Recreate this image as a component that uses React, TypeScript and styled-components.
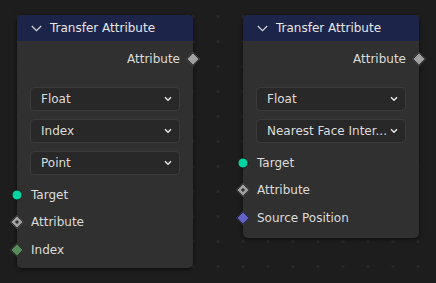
import React from "react";
import styled, { createGlobalStyle, css } from "styled-components";

const GlobalStyle = createGlobalStyle`
  html, body {
    margin: 0;
    padding: 0;
    background: #1d1d1d;
  }
  body {
    font-family: "DejaVu Sans", "Liberation Sans", sans-serif;
    font-size: 12px;
  }
`;

type SocketKind = "geometry" | "float" | "field" | "int" | "vector";

const socketColors: Record<SocketKind, string> = {
  geometry: "#00d6a3",
  float: "#a1a1a1",
  field: "#a1a1a1",
  int: "#598c5c",
  vector: "#6363c7",
};

interface NodeData {
  output: string;
  options: string[];
  inputs: { label: string; kind: SocketKind }[];
  bottom: number;
}

const nodes: NodeData[] = [
  {
    output: "Attribute",
    options: ["Float", "Index", "Point"],
    inputs: [
      { label: "Target", kind: "geometry" },
      { label: "Attribute", kind: "field" },
      { label: "Index", kind: "int" },
    ],
    bottom: 4,
  },
  {
    output: "Attribute",
    options: ["Float", "Nearest Face Inter..."],
    inputs: [
      { label: "Target", kind: "geometry" },
      { label: "Attribute", kind: "field" },
      { label: "Source Position", kind: "vector" },
    ],
    bottom: 6,
  },
];

const Canvas = styled.div`
  width: 436px;
  height: 283px;
  box-sizing: border-box;
  overflow: hidden;
  display: flex;
  align-items: flex-start;
  gap: 50px;
  padding: 15px 0 0 17px;
  background-color: #1d1d1d;
  background-image: radial-gradient(circle, #2a2a2a 1.3px, transparent 1.6px);
  background-size: 25px 25px;
  background-position: 5.5px 4px;
`;

const Node = styled.div<{ $bottom: number }>`
  width: 176px;
  background: #303030;
  border-radius: 5px;
  box-shadow: 0 1px 5px rgba(0, 0, 0, 0.6);
  padding-bottom: ${(p) => p.$bottom}px;
`;

const Header = styled.div`
  height: 26px;
  display: flex;
  align-items: center;
  gap: 8px;
  padding-left: 14px;
  background: #1d2449;
  border-radius: 5px 5px 0 0;
  color: #e6e6e6;
`;

const Body = styled.div`
  padding-top: 4px;
`;

const Row = styled.div<{ $out?: boolean }>`
  position: relative;
  height: ${(p) => (p.$out ? "28px" : "27.5px")};
  display: flex;
  align-items: center;
  justify-content: ${(p) => (p.$out ? "flex-end" : "flex-start")};
  padding: ${(p) => (p.$out ? "0 13px 0 0" : "0 0 0 14px")};
  color: #dcdcdc;
`;

const Options = styled.div`
  display: flex;
  flex-direction: column;
  gap: 8px;
  margin: 14px 13px 6px;
`;

const Select = styled.div`
  height: 24px;
  box-sizing: border-box;
  display: flex;
  align-items: center;
  justify-content: space-between;
  padding: 0 7px 0 10px;
  background: #282828;
  border: 1px solid #3b3b3b;
  border-radius: 4px;
  color: #dcdcdc;
  white-space: nowrap;
`;

const Socket = styled.span<{ $kind: SocketKind; $side: "left" | "right" }>`
  position: absolute;
  top: 50%;
  ${(p) => (p.$side === "left" ? "left: 0;" : "right: 0;")}
  box-sizing: border-box;
  background: ${(p) => socketColors[p.$kind]};
  border: 1px solid #1a1a1a;
  ${(p) =>
    p.$kind === "geometry"
      ? css`
          width: 11px;
          height: 11px;
          border-radius: 50%;
          transform: translate(${p.$side === "left" ? "-50%" : "50%"}, -50%);
        `
      : css`
          width: 10px;
          height: 10px;
          transform: translate(${p.$side === "left" ? "-50%" : "50%"}, -50%) rotate(45deg);
        `}
  ${(p) =>
    p.$kind === "field" &&
    css`
      &::after {
        content: "";
        position: absolute;
        left: 50%;
        top: 50%;
        width: 3px;
        height: 3px;
        transform: translate(-50%, -50%);
        background: #303030;
      }
    `}
`;

const HeaderChevron = () => (
  <svg width="11" height="7" viewBox="0 0 11 7">
    <path d="M0.8 1 L5.5 5.6 L10.2 1" fill="none" stroke="#d8d8d8" strokeWidth="1.2" />
  </svg>
);

const SelectChevron = () => (
  <svg width="8" height="6" viewBox="0 0 8 6">
    <path d="M1 1.2 L4 4.2 L7 1.2" fill="none" stroke="#e6e6e6" strokeWidth="1.5" />
  </svg>
);

const TransferNode = ({ data }: { data: NodeData }): JSX.Element => (
  <Node $bottom={data.bottom}>
    <Header>
      <HeaderChevron />
      <span>Transfer Attribute</span>
    </Header>
    <Body>
      <Row $out>
        {data.output}
        <Socket $kind="float" $side="right" />
      </Row>
      <Options>
        {data.options.map((option) => (
          <Select key={option}>
            <span>{option}</span>
            <SelectChevron />
          </Select>
        ))}
      </Options>
      {data.inputs.map((input) => (
        <Row key={input.label}>
          <Socket $kind={input.kind} $side="left" />
          {input.label}
        </Row>
      ))}
    </Body>
  </Node>
);

const App = (): JSX.Element => (
  <>
    <GlobalStyle />
    <Canvas>
      {nodes.map((node, index) => (
        <TransferNode key={index} data={node} />
      ))}
    </Canvas>
  </>
);

export default App;
